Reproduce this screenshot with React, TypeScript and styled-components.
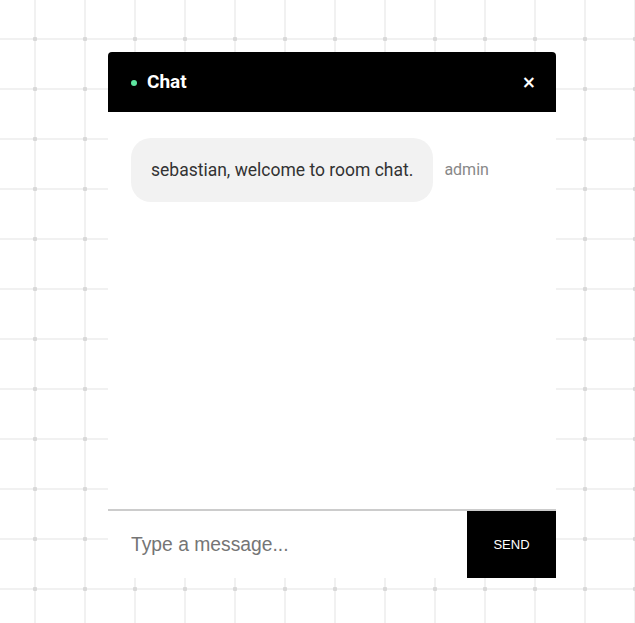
import React from "react";
import { styled, createGlobalStyle } from "styled-components";

const GlobalStyle = createGlobalStyle`
  html, body {
    margin: 0;
    padding: 0;
  }
  body {
    font-family: Roboto, "Liberation Sans", sans-serif;
  }
`;

const Page = styled.div`
  width: 635px;
  height: 623px;
  overflow: hidden;
  box-sizing: border-box;
  padding: 52px 0 0 108px;
  background-color: #fff;
  background-image:
    radial-gradient(circle, #d9d9d9 0 2px, transparent 2.5px),
    linear-gradient(to right, #f1f1f1 0 2px, transparent 2px),
    linear-gradient(to bottom, #f1f1f1 0 2px, transparent 2px);
  background-size: 50px 50px, 50px 50px, 50px 50px;
  background-position: 10px 14px, 34px 0, 0 38px;
`;

const Panel = styled.div`
  width: 448px;
  display: flex;
  flex-direction: column;
  background: #fff;
`;

const Header = styled.div`
  height: 60px;
  background: #000;
  border-radius: 4px 4px 0 0;
  display: flex;
  align-items: center;
  padding: 0 20px 0 23px;
  color: #fff;
`;

const StatusDot = styled.span`
  width: 6px;
  height: 6px;
  border-radius: 50%;
  background: #5ee6a0;
  margin-right: 10px;
  margin-top: 1px;
`;

const Title = styled.span`
  font-size: 19px;
  font-weight: 700;
  flex: 1;
  margin-top: -1px;
`;

const CloseButton = styled.button`
  background: none;
  border: none;
  color: #fff;
  font-family: "DejaVu Sans", sans-serif;
  font-size: 17px;
  font-weight: 700;
  padding: 0;
  cursor: pointer;
`;

const Messages = styled.div`
  height: 397px;
  box-sizing: border-box;
  padding: 26px 23px;
  display: flex;
  flex-direction: column;
  gap: 12px;
`;

const MessageRow = styled.div`
  display: flex;
  align-items: center;
  gap: 11px;
`;

const Bubble = styled.div`
  background: #f2f2f2;
  border-radius: 20px;
  height: 64px;
  box-sizing: border-box;
  padding: 0 20px;
  display: flex;
  align-items: center;
  font-size: 17.5px;
  color: #333;
`;

const Author = styled.span`
  font-size: 16px;
  color: #888;
  margin-top: -1px;
`;

const Composer = styled.form`
  display: flex;
  border-top: 2px solid #ccc;
  height: 69px;
  box-sizing: border-box;
`;

const Input = styled.input`
  flex: 1;
  border: none;
  outline: none;
  background: #fff;
  padding: 0 23px;
  font-family: "Liberation Sans", Arial, sans-serif;
  font-size: 19.3px;
  color: #333;

  &::placeholder {
    color: #757575;
  }
`;

const SendButton = styled.button`
  width: 89px;
  border: none;
  background: #000;
  color: #fff;
  font-family: "Liberation Sans", Arial, sans-serif;
  font-size: 13px;
  cursor: pointer;
`;

const messages = [
  { text: "sebastian, welcome to room chat.", author: "admin" },
];

export default function App() {
  return (
    <>
      <GlobalStyle />
      <Page>
        <Panel>
          <Header>
            <StatusDot />
            <Title>Chat</Title>
            <CloseButton type="button">×</CloseButton>
          </Header>
          <Messages>
            {messages.map((m, i) => (
              <MessageRow key={i}>
                <Bubble>{m.text}</Bubble>
                <Author>{m.author}</Author>
              </MessageRow>
            ))}
          </Messages>
          <Composer onSubmit={(e) => e.preventDefault()}>
            <Input placeholder="Type a message..." />
            <SendButton type="submit">SEND</SendButton>
          </Composer>
        </Panel>
      </Page>
    </>
  );
}
